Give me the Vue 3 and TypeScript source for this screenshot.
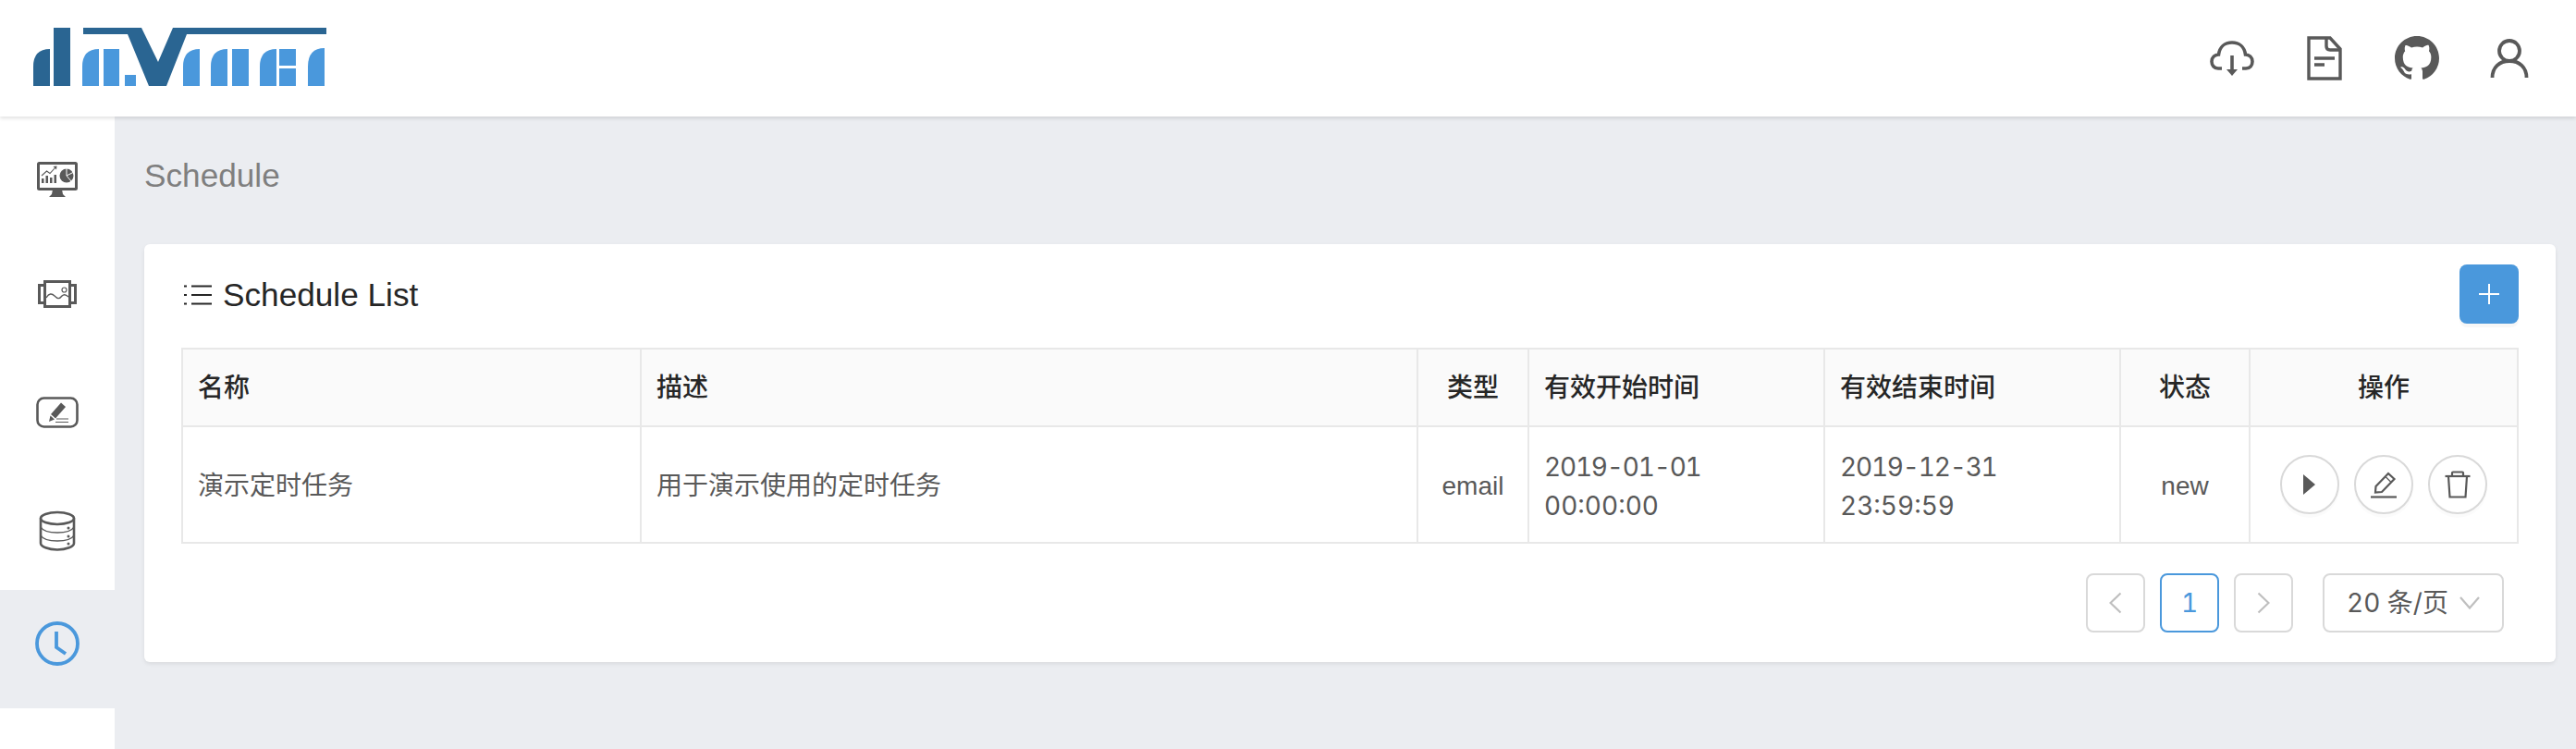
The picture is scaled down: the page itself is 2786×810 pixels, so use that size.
<template>
  <div class="app-page">
    <header class="top-bar">
      <svg class="logo" width="360" height="64" viewBox="0 0 360 64" aria-label="davinci">
        <g fill="#2a6592">
          <path d="M0 63V42Q0 23 18 23V63Z" />
          <rect x="22" width="18" height="63" />
          <polygon points="54,0 117,0 135,37 151,0 317,0 317,7 166,7 144,63 125,63 102,7 54,7" />
        </g>
        <g fill="#4a98dc">
          <path d="M53 63V42Q53 23 71 23V63Z" />
          <rect x="76" y="23" width="17" height="40" />
          <rect x="99" y="51" width="12" height="12" />
          <path d="M162 63V42Q162 23 180 23V63Z" />
          <path d="M192 63V42Q192 23 210 23V63Z" />
          <rect x="215" y="23" width="18" height="40" />
          <path d="M245 63V42Q245 23 263 23V63Z" />
          <rect x="266" y="23" width="18" height="18" />
          <rect x="266" y="44" width="18" height="19" />
          <path d="M297 63V42Q297 22 315 22V63Z" />
        </g>
      </svg>
      <div class="top-actions">
        <a class="top-action">
          <svg width="48" height="40" viewBox="0 0 48 40" fill="none" stroke="#595959" stroke-width="3.6">
            <path d="M13 31H9C4.500 31 2 27.500 2 23.500C2 19 5.500 16 9.500 16C10.500 8 16 3 24 3C32 3 37.500 8 38.500 16C42.500 16 46 19 46 23.500C46 27.500 43.500 31 39 31H35" />
            <path d="M24 17V34" />
            <path d="M18 32H30L24 39Z" fill="#595959" stroke="none" />
          </svg>
        </a>
        <a class="top-action">
          <svg width="38" height="48" viewBox="0 0 38 48" fill="none" stroke="#595959" stroke-width="3.4">
            <path d="M2 2H25L36 14V46H2Z" />
            <path d="M21 2V11Q21 15 25 15H36" />
            <path d="M8 24H30M8 31H19" />
          </svg>
        </a>
        <a class="top-action">
          <svg width="48" height="48" viewBox="0 0 16 16" fill="#595959">
            <path d="M8 0C3.58 0 0 3.58 0 8c0 3.54 2.29 6.53 5.47 7.59.4.07.55-.17.55-.38 0-.19-.01-.82-.01-1.49-2.01.37-2.53-.49-2.69-.94-.09-.23-.48-.94-.82-1.13-.28-.15-.68-.52-.01-.53.63-.01 1.08.58 1.23.82.72 1.21 1.87.87 2.33.66.07-.52.28-.87.51-1.07-1.78-.2-3.64-.89-3.64-3.95 0-.87.31-1.59.82-2.15-.08-.2-.36-1.02.08-2.12 0 0 .67-.21 2.2.82.64-.18 1.32-.27 2-.27.68 0 1.36.09 2 .27 1.53-1.04 2.2-.82 2.2-.82.44 1.1.16 1.92.08 2.12.51.56.82 1.27.82 2.15 0 3.07-1.87 3.75-3.65 3.95.29.25.54.73.54 1.48 0 1.07-.01 1.93-.01 2.2 0 .21.15.46.55.38A8.013 8.013 0 0016 8c0-4.42-3.58-8-8-8z" />
          </svg>
        </a>
        <a class="top-action">
          <svg width="42" height="44" viewBox="0 0 42 44" fill="none" stroke="#595959" stroke-width="3.8">
            <circle cx="21" cy="14" r="11" />
            <path d="M2.500 43C2.500 32 10 25 21 25C32 25 39.500 32 39.500 43" />
          </svg>
        </a>
      </div>
    </header>

    <div class="body-row">
      <aside class="side-nav">
        <div class="nav-item nav-monitor">
          <svg width="44" height="38" viewBox="0 0 44 38" fill="#595959">
            <rect x="1.500" y="1.500" width="41" height="28" rx="1" fill="none" stroke="#595959" stroke-width="3" />
            <polygon points="17,30 27,30 28,35 31,38 13,38 16,35" />
            <rect x="5" y="18" width="2.500" height="5" />
            <rect x="9.500" y="15" width="2.500" height="8" />
            <rect x="14" y="17" width="2.500" height="6" />
            <rect x="18.500" y="14" width="2.500" height="9" />
            <path d="M5 15L10.500 10L14 12.500L20 6" fill="none" stroke="#595959" stroke-width="1.100" />
            <polygon points="17.500,5 21.500,4.500 21,8.500" />
            <circle cx="32" cy="15" r="7.500" />
            <path d="M32 15V7M32 15L39 11.500M32 15L37 21" fill="none" stroke="#fff" stroke-width="1" />
          </svg>
        </div>
        <div class="nav-item">
          <svg width="42" height="30" viewBox="0 0 42 30" fill="none" stroke="#595959">
            <rect x="7.500" y="1.500" width="27" height="27" stroke-width="3" />
            <path d="M7 5.500H1.500V24.500H7M35 5.500H40.500V24.500H35" stroke-width="3" />
            <path d="M9 19C12 14 15 14 18 17C21 20 23 21 26 17C28 15 30 15 33 18" stroke-width="1.400" />
            <circle cx="28.500" cy="10.500" r="2.500" stroke-width="1.200" />
          </svg>
        </div>
        <div class="nav-item">
          <svg width="46" height="34" viewBox="0 0 46 34" fill="none" stroke="#595959">
            <rect x="1.500" y="1.500" width="43" height="31" rx="7" stroke-width="2.600" />
            <path d="M16 19L27 6.500L32 11L21 23.500Z" fill="#595959" stroke="none" />
            <path d="M14 27L15.500 20.500L20 24.500Z" fill="#595959" stroke="none" />
            <path d="M22 24H35M21 27.500H35" stroke-width="1.200" />
          </svg>
        </div>
        <div class="nav-item">
          <svg width="40" height="44" viewBox="0 0 40 44" fill="none" stroke="#595959">
            <ellipse cx="20" cy="8.500" rx="18" ry="6.500" stroke-width="2.600" />
            <path d="M2 8.500V35.500C2 39 10 42.500 20 42.500C30 42.500 38 39 38 35.500V8.500" stroke-width="2.600" />
            <path d="M2 18C4 21.500 11 24 20 24C29 24 36 21.500 38 18M2 27C4 30.500 11 33 20 33C29 33 36 30.500 38 27" stroke-width="1.500" />
            <g fill="#595959" stroke="none">
              <circle cx="32" cy="19" r="1.500" />
              <circle cx="32" cy="28" r="1.500" />
              <circle cx="32" cy="36" r="1.500" />
            </g>
          </svg>
        </div>
        <div class="nav-item nav-active">
          <svg width="48" height="48" viewBox="0 0 48 48" fill="none" stroke="#4a98dc" stroke-width="3.800">
            <circle cx="24" cy="24" r="22" />
            <path d="M23 11V28L33 35" />
          </svg>
        </div>
      </aside>

      <main class="content">
        <h1 class="page-title">Schedule</h1>
        <section class="card">
          <div class="card-head">
            <h2 class="card-title">
              <svg width="30" height="24" viewBox="0 0 30 24" fill="none" stroke="#262626" stroke-width="2.200">
                <path d="M8 2.500H30M8 12H30M8 21.500H30" />
                <path d="M0 2.500H3M0 12H3M0 21.500H3" />
              </svg>
              Schedule List
            </h2>
            <button type="button" class="add-btn" aria-label="add">
              <svg width="24" height="24" viewBox="0 0 24 24" stroke="#fff" stroke-width="2"><path d="M12 1V23M1 12H23" /></svg>
            </button>
          </div>

          <table class="schedule-table">
            <colgroup>
              <col v-for="w in colWidths" :key="w.key" :style="{ width: w.px + 'px' }" />
            </colgroup>
            <thead>
              <tr>
                <th>名称</th>
                <th>描述</th>
                <th class="center">类型</th>
                <th>有效开始时间</th>
                <th>有效结束时间</th>
                <th class="center">状态</th>
                <th class="center">操作</th>
              </tr>
            </thead>
            <tbody>
              <tr v-for="row in rows" :key="row.name">
                <td>{{ row.name }}</td>
                <td>{{ row.desc }}</td>
                <td class="center">{{ row.type }}</td>
                <td class="nums"><span class="date">{{ row.startDate }}</span><br />{{ row.startTime }}</td>
                <td class="nums"><span class="date">{{ row.endDate }}</span><br />{{ row.endTime }}</td>
                <td class="center">{{ row.status }}</td>
                <td>
                  <div class="row-actions">
                    <button type="button" class="circle-btn" aria-label="start">
                      <svg width="14" height="24" viewBox="0 0 14 24" fill="#595959"><path d="M0 1L13 12L0 23Z" /></svg>
                    </button>
                    <button type="button" class="circle-btn" aria-label="edit">
                      <svg width="30" height="30" viewBox="0 0 30 30" fill="none" stroke="#595959" stroke-width="2.200">
                        <path d="M1 28.500H29" />
                        <path d="M6 23.500L6.500 17L20 3L26.500 9L13 23Z" />
                        <path d="M17 6.500L23 12.500" stroke-width="1.200" />
                      </svg>
                    </button>
                    <button type="button" class="circle-btn" aria-label="delete">
                      <svg width="28" height="30" viewBox="0 0 28 30" fill="none" stroke="#595959" stroke-width="2.200">
                        <path d="M0.500 6H27.500" />
                        <path d="M8 5.500V2.500Q8 1.500 9 1.500H19Q20 1.500 20 2.500V5.500" />
                        <path d="M4 6L5.500 28.500H22.500L24 6" />
                      </svg>
                    </button>
                  </div>
                </td>
              </tr>
            </tbody>
          </table>

          <div class="pager">
            <button type="button" class="page-btn" aria-label="prev">
              <svg width="14" height="24" viewBox="0 0 14 24" fill="none" stroke="#bfbfbf" stroke-width="2.200"><path d="M12.500 1.500L1.500 12L12.500 22.500" /></svg>
            </button>
            <button type="button" class="page-btn page-current nums">1</button>
            <button type="button" class="page-btn" aria-label="next">
              <svg width="14" height="24" viewBox="0 0 14 24" fill="none" stroke="#bfbfbf" stroke-width="2.200"><path d="M1.500 1.500L12.500 12L1.500 22.500" /></svg>
            </button>
            <div class="page-size">
              <span class="nums">20 条/页</span>
              <svg width="22" height="14" viewBox="0 0 22 14" fill="none" stroke="#bfbfbf" stroke-width="2.200"><path d="M1 1L11 12.500L21 1" /></svg>
            </div>
          </div>
        </section>
      </main>
    </div>
  </div>
</template>

<script setup lang="ts">
const colWidths = [
  { key: 'name', px: 496 },
  { key: 'desc', px: 840 },
  { key: 'type', px: 120 },
  { key: 'start', px: 320 },
  { key: 'end', px: 320 },
  { key: 'status', px: 140 },
  { key: 'actions', px: 290 },
]

const rows = [
  {
    name: '演示定时任务',
    desc: '用于演示使用的定时任务',
    type: 'email',
    startDate: '2019-01-01',
    startTime: '00:00:00',
    endDate: '2019-12-31',
    endTime: '23:59:59',
    status: 'new',
  },
]
</script>

<style>
html,
body {
  margin: 0;
  background: #ebedf1;
}
</style>

<style scoped>
.app-page {
  display: flex;
  flex-direction: column;
  min-height: 810px;
  font-family: "Liberation Sans", "Noto Sans CJK SC", sans-serif;
  font-size: 28px;
  line-height: 42px;
  color: #595959;
  background: #ebedf1;
}

.nums {
  font-family: Inter, "Noto Sans CJK SC", sans-serif;
  font-variant-numeric: tabular-nums;
}

.date {
  letter-spacing: -1.200px;
}

.top-bar {
  position: relative;
  z-index: 2;
  display: flex;
  align-items: center;
  justify-content: space-between;
  height: 126px;
  padding: 0 22px 0 36px;
  background: #fff;
  box-shadow: 0 2px 4px rgba(0, 0, 0, 0.12);
}

.logo {
  margin-top: -2px;
}

.top-actions {
  display: flex;
  align-items: center;
}

.top-action {
  display: flex;
  align-items: center;
  justify-content: center;
  width: 100px;
}

.body-row {
  display: flex;
  flex: 1;
}

.side-nav {
  flex: none;
  width: 124px;
  background: #fff;
}

.nav-item {
  display: flex;
  align-items: center;
  justify-content: center;
  height: 128px;
}

.nav-monitor svg {
  margin-top: 8px;
}

.nav-active {
  background: #ebedf1;
}

.nav-active svg {
  margin-bottom: 12px;
}

.content {
  flex: 1;
  min-width: 0;
  padding: 40px 22px 0 32px;
}

.page-title {
  margin: 0 0 50px;
  font-size: 35.200px;
  line-height: 48px;
  font-weight: 400;
  color: #7f7f7f;
}

.card {
  padding: 22px 40px 32px;
  background: #fff;
  border-radius: 6px;
  box-shadow: 0 2px 4px rgba(0, 0, 0, 0.08);
}

.card-head {
  display: flex;
  align-items: center;
  justify-content: space-between;
  margin-bottom: 26px;
}

.card-title {
  display: flex;
  align-items: center;
  gap: 12px;
  margin: 0;
  padding: 2px 0 0 3px;
  font-size: 35.200px;
  line-height: 48px;
  font-weight: 400;
  color: #262626;
}

.add-btn {
  display: flex;
  align-items: center;
  justify-content: center;
  width: 64px;
  height: 64px;
  padding: 0;
  border: none;
  border-radius: 8px;
  background: #4a98dc;
  box-shadow: 0 4px 0 rgba(0, 0, 0, 0.03);
}

.schedule-table {
  width: 2528px;
  table-layout: fixed;
  border-collapse: separate;
  border-spacing: 0;
  border-top: 2px solid #e8e8e8;
  border-left: 2px solid #e8e8e8;
}

.schedule-table th,
.schedule-table td {
  padding: 21px 16px 19px;
  border-right: 2px solid #e8e8e8;
  border-bottom: 2px solid #e8e8e8;
  text-align: left;
  box-sizing: border-box;
}

.schedule-table td {
  padding-top: 22px;
  padding-bottom: 18px;
}

.schedule-table th {
  font-weight: 500;
  color: #262626;
  background: #fafafa;
}

.schedule-table .center {
  text-align: center;
}

.row-actions {
  display: flex;
  justify-content: center;
  gap: 16px;
}

.circle-btn {
  display: flex;
  align-items: center;
  justify-content: center;
  width: 64px;
  height: 64px;
  margin: -13px 0 -9px;
  padding: 0;
  border: 2px solid #d9d9d9;
  border-radius: 50%;
  background: #fff;
  box-shadow: 0 4px 0 rgba(0, 0, 0, 0.015);
}

.pager {
  display: flex;
  justify-content: flex-end;
  gap: 16px;
  margin-top: 32px;
  padding-right: 16px;
}

.page-btn {
  display: flex;
  align-items: center;
  justify-content: center;
  width: 64px;
  height: 64px;
  padding: 0;
  border: 2px solid #d9d9d9;
  border-radius: 8px;
  background: #fff;
  color: inherit;
  font-size: 28px;
}

.page-current {
  border-color: #4a98dc;
  color: #4a98dc;
}

.page-size {
  display: flex;
  align-items: center;
  justify-content: space-between;
  width: 196px;
  height: 64px;
  margin-left: 16px;
  padding: 0 24px;
  border: 2px solid #d9d9d9;
  border-radius: 8px;
  box-sizing: border-box;
  background: #fff;
}
</style>
